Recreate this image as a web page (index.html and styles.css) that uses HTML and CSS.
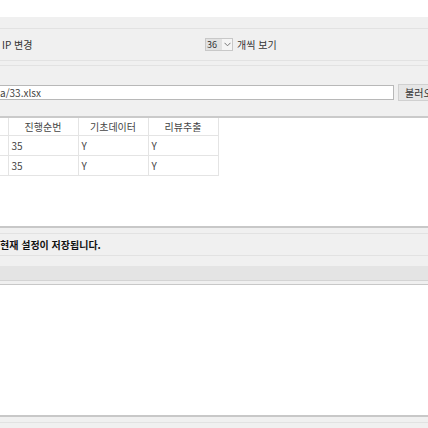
FILE: index.html
```html
<!DOCTYPE html>
<html lang="ko">
<head>
<meta charset="utf-8">
<link rel="stylesheet" href="styles.css">
</head>
<body>
<div class="top"></div>
<div class="panel">
  <div class="bar1"></div>
  <div class="row-ip">
    <span class="label">IP 변경</span>
    <span class="view">
      <span class="select"><span class="sel-val">36</span><span class="arrow">
        <svg width="7" height="5" viewBox="0 0 7 5"><path d="M0.5 0.8 L3.5 3.8 L6.5 0.8" fill="none" stroke="#777" stroke-width="1"/></svg>
      </span></span>
      <span class="view-text">개씩 보기</span>
    </span>
  </div>
  <div class="gap"></div>
  <div class="row-file">
    <div class="input">a/33.xlsx</div>
    <div class="btn">불러오기</div>
  </div>
</div>
<table class="grid">
  <tr class="head">
    <td class="cut"></td><td>진행순번</td><td>기초데이터</td><td>리뷰추출</td>
  </tr>
  <tr>
    <td class="cut"></td><td>35</td><td>Y</td><td>Y</td>
  </tr>
  <tr>
    <td class="cut"></td><td>35</td><td>Y</td><td>Y</td>
  </tr>
</table>
<div class="space1"></div>
<div class="save">
  <div class="save-top"></div>
  <div class="save-text">현재 설정이 저장됩니다.</div>
  <div class="save-mid"></div>
  <div class="save-band"></div>
  <div class="save-bot"></div>
</div>
<div class="space2"></div>
<div class="foot">
  <div class="foot-a"></div>
  <div class="foot-b"></div>
</div>
</body>
</html>
```
FILE: styles.css
```css
html, body {
  margin: 0;
  padding: 0;
  background: #ffffff;
  overflow: hidden;
  font-family: "Noto Sans CJK KR", "DejaVu Sans", sans-serif;
  font-size: 10px;
  color: #333;
}
.top { height: 17px; }
.panel {
  background: #f0f0f0;
  border-bottom: 2px solid #cacaca;
  display: flex;
  flex-direction: column;
}
.bar1 { height: 11px; border-bottom: 1px solid #e2e2e2; }
.row-ip {
  height: 31px;
  border-bottom: 1px solid #e2e2e2;
  display: flex;
  align-items: center;
  padding-left: 2px;
}
.label { font-size: 10px; width: 203px; flex-shrink: 0; }
.view { display: flex; align-items: center; gap: 4px; }
.select {
  display: flex;
  align-items: center;
  height: 11px;
  width: 26px;
  border: 1px solid #c8c8c8;
  background: #f5f5f5;
}
.sel-val {
  background: #e2e2e2;
  width: 15px;
  height: 11px;
  line-height: 11px;
  font-size: 9px;
  padding-left: 1px;
}
.arrow { display: flex; align-items: center; padding-left: 2px; }
.view-text { font-size: 10px; }
.gap { height: 4px; border-bottom: 1px solid #e2e2e2; }
.row-file {
  height: 50px;
  display: flex;
  align-items: center;
  gap: 4px;
  padding-top: 3px;
  box-sizing: border-box;
  overflow: hidden;
}
.input {
  flex-shrink: 0;
  width: 393px;
  height: 13px;
  line-height: 13px;
  border: 1px solid #b8b8b8;
  border-left: none;
  background: #fff;
  font-size: 10px;
  color: #444;
}
.btn {
  flex-shrink: 0;
  height: 15px;
  line-height: 15px;
  padding: 0 6px;
  border: 1px solid #d0d0d0;
  background: #e6e6e6;
  font-size: 10px;
  white-space: nowrap;
}
.grid {
  border-collapse: collapse;
  font-size: 10px;
  color: #444;
}
.grid td {
  border: 1px solid #e4e4e4;
  height: 20px;
  padding: 0 3px;
  width: 63px;
  box-sizing: border-box;
}
.grid tr:first-child td { border-top: none; }
.grid .head td { height: 17px; text-align: center; width: 70px; }
.grid td.cut { width: 8px; padding: 0; border-left: none; }
.space1 { height: 50px; }
.save {
  background: #f0f0f0;
  border-top: 2px solid #c8c8c8;
  border-bottom: 1px solid #c8c8c8;
  display: flex;
  flex-direction: column;
}
.save-top { height: 5px; border-bottom: 1px solid #e2e2e2; }
.save-text {
  height: 21px;
  line-height: 21px;
  font-weight: bold;
  font-size: 10px;
  color: #111;
  border-bottom: 1px solid #e2e2e2;
}
.save-mid { height: 10px; }
.save-band { height: 14px; background: #e4e4e4; border-bottom: 1px solid #d4d4d4; }
.save-bot { height: 3px; }
.space2 { height: 130px; }
.foot { border-top: 2px solid #c8c8c8; background: #f0f0f0; }
.foot-a { height: 5px; border-bottom: 1px solid #e2e2e2; }
.foot-b { height: 10px; }
```
